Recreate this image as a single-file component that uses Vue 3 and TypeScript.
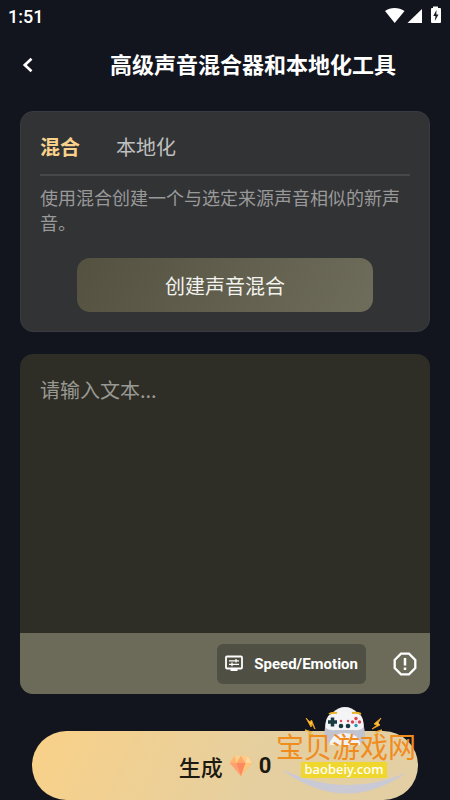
<script setup lang="ts">
import { ref } from 'vue'

type Tab = { id: string; label: string }

const tabs: Tab[] = [
  { id: 'mix', label: '混合' },
  { id: 'local', label: '本地化' },
]
const active = ref<string>('mix')
const text = ref<string>('')
const credits = ref<number>(0)
</script>

<template>
  <div class="screen">
    <div class="status">
      <span>1:51</span>
      <svg class="status-icons" width="58" height="20" viewBox="0 0 58 20" aria-hidden="true">
        <path d="M1 5C6 1 15 1 20.500 5L10.700 17Z" fill="#fff" />
        <path d="M38 3V17H23.500Z" fill="#fff" />
        <path d="M49 2V0.500H54V2H56Q57 2 57 3V16Q57 17 56 17H48Q47 17 47 16V3Q47 2 48 2Z" fill="#fff" />
        <path d="M52.500 4L49.300 10H51.500L50.800 15L54.500 8.500H52.300Z" fill="#12151e" />
      </svg>
    </div>

    <header class="header">
      <button class="back" type="button" aria-label="返回">
        <svg width="16" height="20" viewBox="0 0 16 20"><path d="M11.500 2.800L4.800 9L11.500 15.300" fill="none" stroke="#fff" stroke-width="2.700" /></svg>
      </button>
      <h1>高级声音混合器和本地化工具</h1>
    </header>

    <main class="content">
      <section class="card">
        <nav class="tabs">
          <button
            v-for="tab in tabs"
            :key="tab.id"
            type="button"
            class="tab"
            :class="{ active: tab.id === active }"
            @click="active = tab.id"
          >{{ tab.label }}</button>
        </nav>
        <p class="description">使用混合创建一个与选定来源声音相似的新声音。</p>
        <button class="create" type="button">创建声音混合</button>
      </section>

      <section class="editor">
        <textarea v-model="text" placeholder="请输入文本..." aria-label="请输入文本"></textarea>
        <div class="toolbar">
          <button class="speed" type="button">
            <svg width="18" height="17" viewBox="0 0 18 17" aria-hidden="true">
              <rect x="1" y="1.500" width="16" height="12" rx="1" fill="none" stroke="#fff" stroke-width="1.800" />
              <path d="M5.500 14H12.500V16H5.500Z" fill="#fff" />
              <path d="M4 5.800H10.500M11.500 5.800H14M11 4V7.600M4 9.400H6.500M7.500 9.400H14M7 7.600V11.200" fill="none" stroke="#fff" stroke-width="1.300" />
            </svg>
            <span>Speed/Emotion</span>
          </button>
          <button class="info" type="button" aria-label="提示">
            <svg width="24" height="24" viewBox="0 0 24 24">
              <path d="M8 1.700H16L22.300 8V16L16 22.300H8L1.700 16V8Z" fill="none" stroke="#fff" stroke-width="2.300" />
              <path d="M12 6V13.500M12 15.500V18" fill="none" stroke="#fff" stroke-width="2.500" />
            </svg>
          </button>
        </div>
      </section>

      <div class="footer">
        <button class="generate" type="button">
          <span>生成</span>
          <svg width="22" height="20" viewBox="0 0 22 20" aria-hidden="true">
            <path d="M4.500 0H17.500L22 7L11 20L0 7Z" fill="#ffaa68" />
            <path d="M4.500 0L6.500 7H0Z" fill="#ffb56b" />
            <path d="M4.500 0H11L6.500 7Z" fill="#ffd08a" />
            <path d="M11 0L15.500 7H6.500Z" fill="#ffa868" />
            <path d="M11 0H17.500L15.500 7Z" fill="#ffc98a" />
            <path d="M17.500 0L22 7H15.500Z" fill="#ffda9c" />
            <path d="M0 7H6.500L11 20Z" fill="#ffa070" />
            <path d="M6.500 7H15.500L11 20Z" fill="#fb8a60" />
            <path d="M15.500 7H22L11 20Z" fill="#ffc67c" />
          </svg>
          <span class="credits">{{ credits }}</span>
        </button>

        <svg class="badge" width="142" height="92" viewBox="0 0 142 92" aria-hidden="true">
          <path d="M5 61Q68 91 130 65Q68 108 5 61Z" fill="#c9cad6" />
          <ellipse cx="69" cy="18" rx="17" ry="19" fill="#f3f3f5" />
          <path d="M54 27Q69 17 84 27V37H54Z" fill="#f3f3f5" />
          <path d="M55 6Q49 8 49 22L51 35Q54 33 57 27Q69 19 80 27Q83 33 87 35L88 22Q88 8 83 6Q69 3 55 6Z" fill="#f4f4f7" />
          <path d="M49 19Q47 33 51 36Q55 33 58 28Q69 22 80 28Q83 33 86 36Q91 34 88 19Q84 23 78 22H60Q53 23 49 19Z" fill="#c1c3cf" />
          <path d="M53 6Q56 4 61 5M76 5Q81 4 85 6" fill="none" stroke="#e9b329" stroke-width="2" />
          <path d="M52 14H61M56.500 9.500V18.500" stroke="#173940" stroke-width="3.500" />
          <circle cx="80" cy="14" r="1.500" fill="#d8dce4" />
          <circle cx="80" cy="10.500" r="1.700" fill="#df4353" />
          <circle cx="83.500" cy="14" r="1.700" fill="#df4353" />
          <circle cx="80" cy="17.500" r="1.700" fill="#239aaf" />
          <circle cx="76.500" cy="14" r="1.700" fill="#df4353" />
          <circle cx="65" cy="13" r="1.200" fill="#df4353" />
          <circle cx="72" cy="13" r="1.200" fill="#df4353" />
          <circle cx="65" cy="18" r="2.300" fill="#173940" />
          <circle cx="72" cy="18" r="2.300" fill="#173940" />
          <path d="M30 10L35 19L36 16L39 21L35.500 12L34 14Z" fill="#ffc63d" stroke="#e99b20" />
          <path d="M105 10L98 16L101 17L96 21L104 17L102 15Z" fill="#ffc63d" stroke="#e99b20" />
          <path d="M29 22L35 24L33 26L37 27M106 22L100 24L102 26L98 27" fill="none" stroke="#e8ae36" stroke-width="1.500" />
          <text x="0" y="50" class="badge-name">宝贝游戏网</text>
          <rect x="25" y="54" width="86" height="16" fill="#efd72e" />
          <text x="68" y="66" text-anchor="middle" class="badge-url">baobeiy.com</text>
        </svg>
      </div>
    </main>
  </div>
</template>

<style>
body {
  margin: 0;
  background: #12151e;
}
</style>

<style scoped>
.screen {
  box-sizing: border-box;
  min-height: 100vh;
  display: flex;
  flex-direction: column;
  background: #12151e;
  color: #fff;
  font-family: Roboto, "Noto Sans CJK SC", sans-serif;
}
button,
textarea {
  box-sizing: border-box;
  margin: 0;
  padding: 0;
  border: 0;
  background: none;
  color: inherit;
  font: inherit;
}
button {
  cursor: pointer;
}
svg {
  display: block;
  flex: none;
}
.status {
  display: flex;
  align-items: center;
  justify-content: space-between;
  height: 32px;
  padding: 0 8px;
  font-size: 18px;
  font-weight: 500;
}
.header {
  display: flex;
  align-items: center;
  height: 68px;
  padding: 0 20px;
}
.back {
  flex: none;
  width: 16px;
}
h1 {
  flex: 1;
  margin: 0;
  padding-left: 40px;
  text-align: center;
  font-size: 22px;
  font-weight: 700;
  line-height: 32px;
  white-space: nowrap;
}
.content {
  flex: 1;
  display: flex;
  flex-direction: column;
  gap: 22px;
  padding: 11px 20px 0;
}
.card {
  display: flex;
  flex-direction: column;
  padding: 14px 19px 19px;
  border: 1px solid #3a3b42;
  border-radius: 13px;
  background: #323335;
}
.tabs {
  display: flex;
  gap: 36px;
  padding-bottom: 8px;
  border-bottom: 2px solid #47484a;
}
.tab {
  height: 40px;
  font-size: 20px;
  color: #c0c0c0;
}
.tab.active {
  font-weight: 700;
  color: #f8d28c;
}
.description {
  margin: 10px 0 22px;
  font-size: 18px;
  line-height: 25px;
  color: #999;
}
.create {
  align-self: center;
  width: 80%;
  height: 54px;
  border-radius: 13px;
  background: linear-gradient(120deg, #545140, #6e6c5a);
  font-size: 20px;
  color: #f2f2ee;
}
.editor {
  display: flex;
  flex-direction: column;
  overflow: hidden;
  border-radius: 13px;
  background: #2e2d26;
}
textarea {
  display: block;
  width: 100%;
  height: 279px;
  padding: 21px 20px;
  resize: none;
  outline: none;
  font-family: "Noto Sans CJK SC", sans-serif;
  font-size: 20px;
  line-height: 30px;
}
textarea::placeholder {
  color: #999993;
  opacity: 1;
}
.toolbar {
  display: flex;
  align-items: center;
  justify-content: flex-end;
  gap: 27px;
  height: 61px;
  padding-right: 13px;
  background: #6c6b59;
}
.speed {
  display: flex;
  align-items: center;
  gap: 11px;
  height: 40px;
  padding: 0 8px;
  border-radius: 6px;
  background: #504f43;
  font-size: 15px;
  font-weight: 700;
}
.footer {
  position: relative;
  padding: 15px 12px 0;
}
.generate {
  display: flex;
  align-items: center;
  justify-content: center;
  gap: 7px;
  width: 100%;
  height: 69px;
  border-radius: 35px;
  background: linear-gradient(115deg, #f9d188, #e5cfa0 60%, #e3cfa4);
  color: #1d1a12;
  font-size: 22px;
  font-weight: 500;
}
.credits {
  font-weight: 700;
}
.badge {
  position: absolute;
  right: 12px;
  bottom: 0;
  overflow: visible;
  pointer-events: none;
}
.badge-name {
  fill: #f08c1e;
  font-family: "Liberation Sans", "Noto Sans CJK SC", sans-serif;
  font-size: 28px;
}
.badge-url {
  fill: #fff;
  font-family: "Noto Sans", sans-serif;
  font-size: 13px;
  font-weight: 500;
}
</style>
